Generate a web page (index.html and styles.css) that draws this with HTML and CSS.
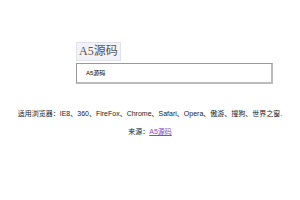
FILE: index.html
```html
<!doctype html>
<html lang="zh-CN">
  <head>
    <meta charset="UTF-8" />
    <title>A5源码</title>
    <link rel="stylesheet" href="styles.css">
  </head>
  <body>
    <div class="demo">
      <span class="tab">A5源码</span>
      <div class="field">A5源码</div>
    </div>

    <p class="info first">适用浏览器：IE8、360、FireFox、Chrome、Safari、Opera、傲游、搜狗、世界之窗.</p>
    <p class="info">来源：<a href="#">A5源码</a></p>
  </body>
</html>
```

FILE: styles.css
```css
body {
  margin: 0;
  background: #fff;
  font-family: "Liberation Sans", "Noto Sans CJK SC", sans-serif;
  color: #000;
}

.demo {
  padding: 41px 0 0 76px;
}

.tab {
  display: inline-block;
  padding: 1px 2px;
  background: #f2f2f8;
  border: 1px solid #e2e2ec;
  font-family: "Liberation Serif", "Noto Sans CJK SC", serif;
  font-size: 12px;
  line-height: 15px;
  color: #555;
}

.field {
  width: 185px;
  height: 18px;
  margin-top: 2px;
  padding-left: 9px;
  border: 1px solid #999;
  border-right: 2px solid #bbb;
  border-bottom: 2px solid #bbb;
  font-size: 6px;
  line-height: 18px;
}

.info {
  margin: 0;
  text-align: center;
  font-size: 7px;
  line-height: 18px;
  color: #222;
}

.first {
  margin-top: 21px;
}

.info a {
  color: #7b52b9;
}
```
